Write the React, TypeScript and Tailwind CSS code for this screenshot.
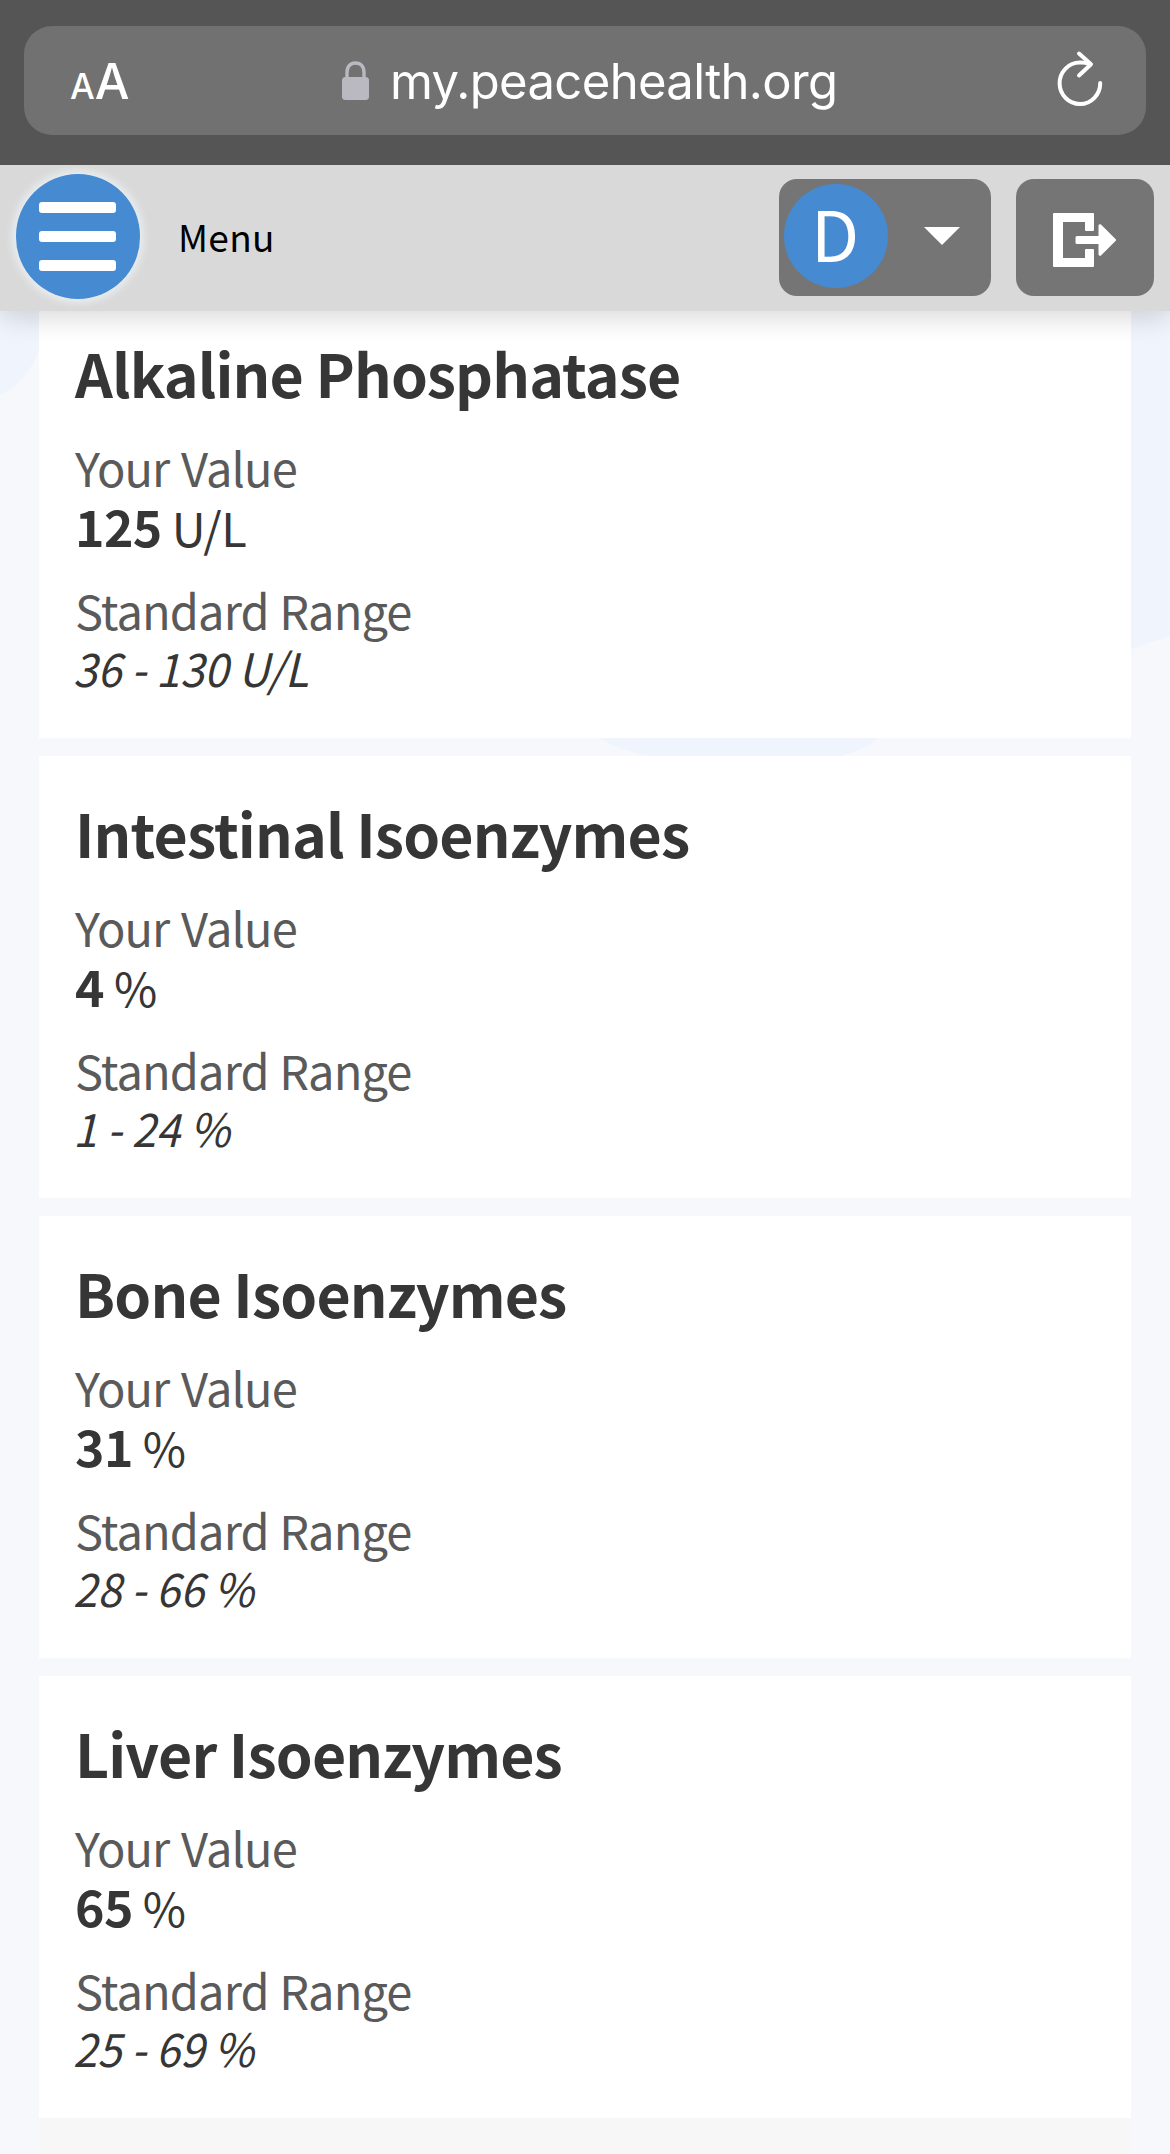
const results = [
  { name: "Alkaline Phosphatase", value: "125", unit: "U/L", range: "36 - 130 U/L" },
  { name: "Intestinal Isoenzymes", value: "4", unit: "%", range: "1 - 24 %" },
  { name: "Bone Isoenzymes", value: "31", unit: "%", range: "28 - 66 %" },
  { name: "Liver Isoenzymes", value: "65", unit: "%", range: "25 - 69 %" },
];

function LockIcon() {
  return (
    <svg className="w-[27px] h-[40px]" viewBox="0 0 27 40" fill="none">
      <path d="M5 19V11.500C5 5.500 8.300 2 13.500 2S22 5.500 22 11.500V19" stroke="#bab9c1" strokeWidth="3.4" />
      <rect x="0" y="16" width="27" height="23" rx="3.5" fill="#bab9c1" />
    </svg>
  );
}

function ReloadIcon() {
  return (
    <svg
      className="w-[48px] h-[58px] overflow-visible"
      viewBox="0 0 48 58"
      fill="none"
      stroke="white"
      strokeWidth="4"
      strokeLinecap="round"
      strokeLinejoin="round">
      <path d="M44.200 31A20.300 20.700 0 1 1 24 10.600Q29 10.400 33 12" />
      <path d="M23 1.500L35 12.200L23 23.500" />
    </svg>
  );
}

function LogoutIcon() {
  return (
    <svg className="mt-[4px] w-[64px] h-[54px]" viewBox="0 0 64 54" fill="white">
      <path d="M1 0H40a1 1 0 0 1 1 1V17a1 1 0 0 1-1 1H33a1 1 0 0 1-1-1V9H10V45H32V37a1 1 0 0 1 1-1H40a1 1 0 0 1 1 1V53a1 1 0 0 1-1 1H1a1 1 0 0 1-1-1V1a1 1 0 0 1 1-1Z" />
      <path d="M24 23H45.500V12.500Q46 10.500 48 11.500L63 26.500V27.500L48 42.500Q46 43.500 45.500 41.500V31H24Q22.500 31 22.500 29.500V24.500Q22.500 23 24 23Z" />
    </svg>
  );
}

function AddressBar() {
  return (
    <div className="relative z-20 h-[165px] bg-[#555555] px-6 pt-[26px] font-['Inter',sans-serif] text-white">
      <div className="flex items-center h-[109px] rounded-[28px] bg-[#717171] pl-[46px] pr-[42px]">
        <div className="flex items-baseline w-[272px] pt-[6px] leading-[60px] font-medium">
          <span className="text-[35px]">A</span>
          <span className="text-[49px]">A</span>
        </div>
        <div className="flex items-center flex-1">
          <LockIcon />
          <span className="ml-[21px] pt-[2px] text-[49px] leading-[60px] tracking-[-0.65px]">my.peacehealth.org</span>
        </div>
        <ReloadIcon />
      </div>
    </div>
  );
}

function Toolbar() {
  return (
    <div className="relative z-10 flex items-center h-[146px] bg-[#d9d9d9] pl-4 pr-4 pb-[3px] shadow-[0_6px_26px_rgba(0,0,0,0.16)]">
      <div className="flex flex-col items-center justify-center gap-[18.500px] w-[124px] h-[125px] rounded-full bg-[#468ad2] pr-[2px] shadow-[0_0_8px_3px_rgba(240,246,250,0.8)]">
        <div className="w-[77px] h-[10.500px] rounded-[3px] bg-white"></div>
        <div className="w-[77px] h-[10.500px] rounded-[3px] bg-white"></div>
        <div className="w-[77px] h-[10.500px] rounded-[3px] bg-white"></div>
      </div>
      <div className="ml-[38px] -mt-[2px] text-[37px] leading-[50px] tracking-[0.3px] text-black">Menu</div>
      <div className="flex gap-[25px] ml-auto pt-[2px]">
        <div className="flex items-center w-[212px] h-[117px] rounded-[18px] bg-[#757575] pl-[5px] pb-[3px]">
          <div className="flex justify-center w-[104px] h-[104px] rounded-full bg-[#468ad2] text-[70px] leading-[95px] text-white pr-[2px]">
            D
          </div>
          <svg className="ml-[36px] w-[36px] h-[18px]" viewBox="0 0 36 18" fill="white">
            <path d="M0 0H36L18 18Z" />
          </svg>
        </div>
        <div className="flex items-center justify-center w-[138px] h-[117px] rounded-[18px] bg-[#757575]">
          <LogoutIcon />
        </div>
      </div>
    </div>
  );
}

type ResultProps = { name: string; value: string; unit: string; range: string };

function ResultCard({ name, value, unit, range }: ResultProps) {
  return (
    <div className="h-[442px] bg-white pt-[37px] pl-9 text-[47px] text-[#363636]">
      <div className="text-[59px] leading-[80px] tracking-[-0.85px] font-semibold">{name}</div>
      <div className="mt-[24px] leading-[60px] tracking-[-0.9px] [word-spacing:2px] text-[#5a5a5a]">Your Value</div>
      <div className="flex items-baseline gap-[10px] -mt-[1px] leading-[58px] tracking-[-0.6px]">
        <span className="text-[50px] font-bold">{value}</span>
        <span>{unit}</span>
      </div>
      <div className="mt-[24px] leading-[60px] tracking-[-0.9px] [word-spacing:1px] text-[#5a5a5a]">Standard Range</div>
      <div className="-mt-[1px] -ml-[2px] w-fit origin-left scale-x-[0.945] text-[46px] leading-[56px] italic">{range}</div>
    </div>
  );
}

export default function App() {
  return (
    <div className="relative w-[1170px] h-[2154px] overflow-hidden bg-[#f6f8fc] font-['Noto_Sans_CJK_SC',sans-serif]">
      <AddressBar />
      <Toolbar />
      <svg className="absolute left-0 top-[311px] w-[1170px] h-[460px]" viewBox="0 0 1170 460" fill="#f0f4fc">
        <path d="M0 0H39V40Q25 73 0 84Z" />
        <path d="M1100 0H1170V325L1131 338H1100Z" />
        <path d="M590 420H885Q870 438 840 445H650Q610 438 590 420Z" />
      </svg>
      <div className="relative flex flex-col gap-[18px] -mt-[15px] mx-[39px]">
        {results.map((result) => (
          <ResultCard key={result.name} {...result} />
        ))}
        <div className="h-[60px] -mt-[18px] bg-[#f7f7f7]"></div>
      </div>
    </div>
  );
}
